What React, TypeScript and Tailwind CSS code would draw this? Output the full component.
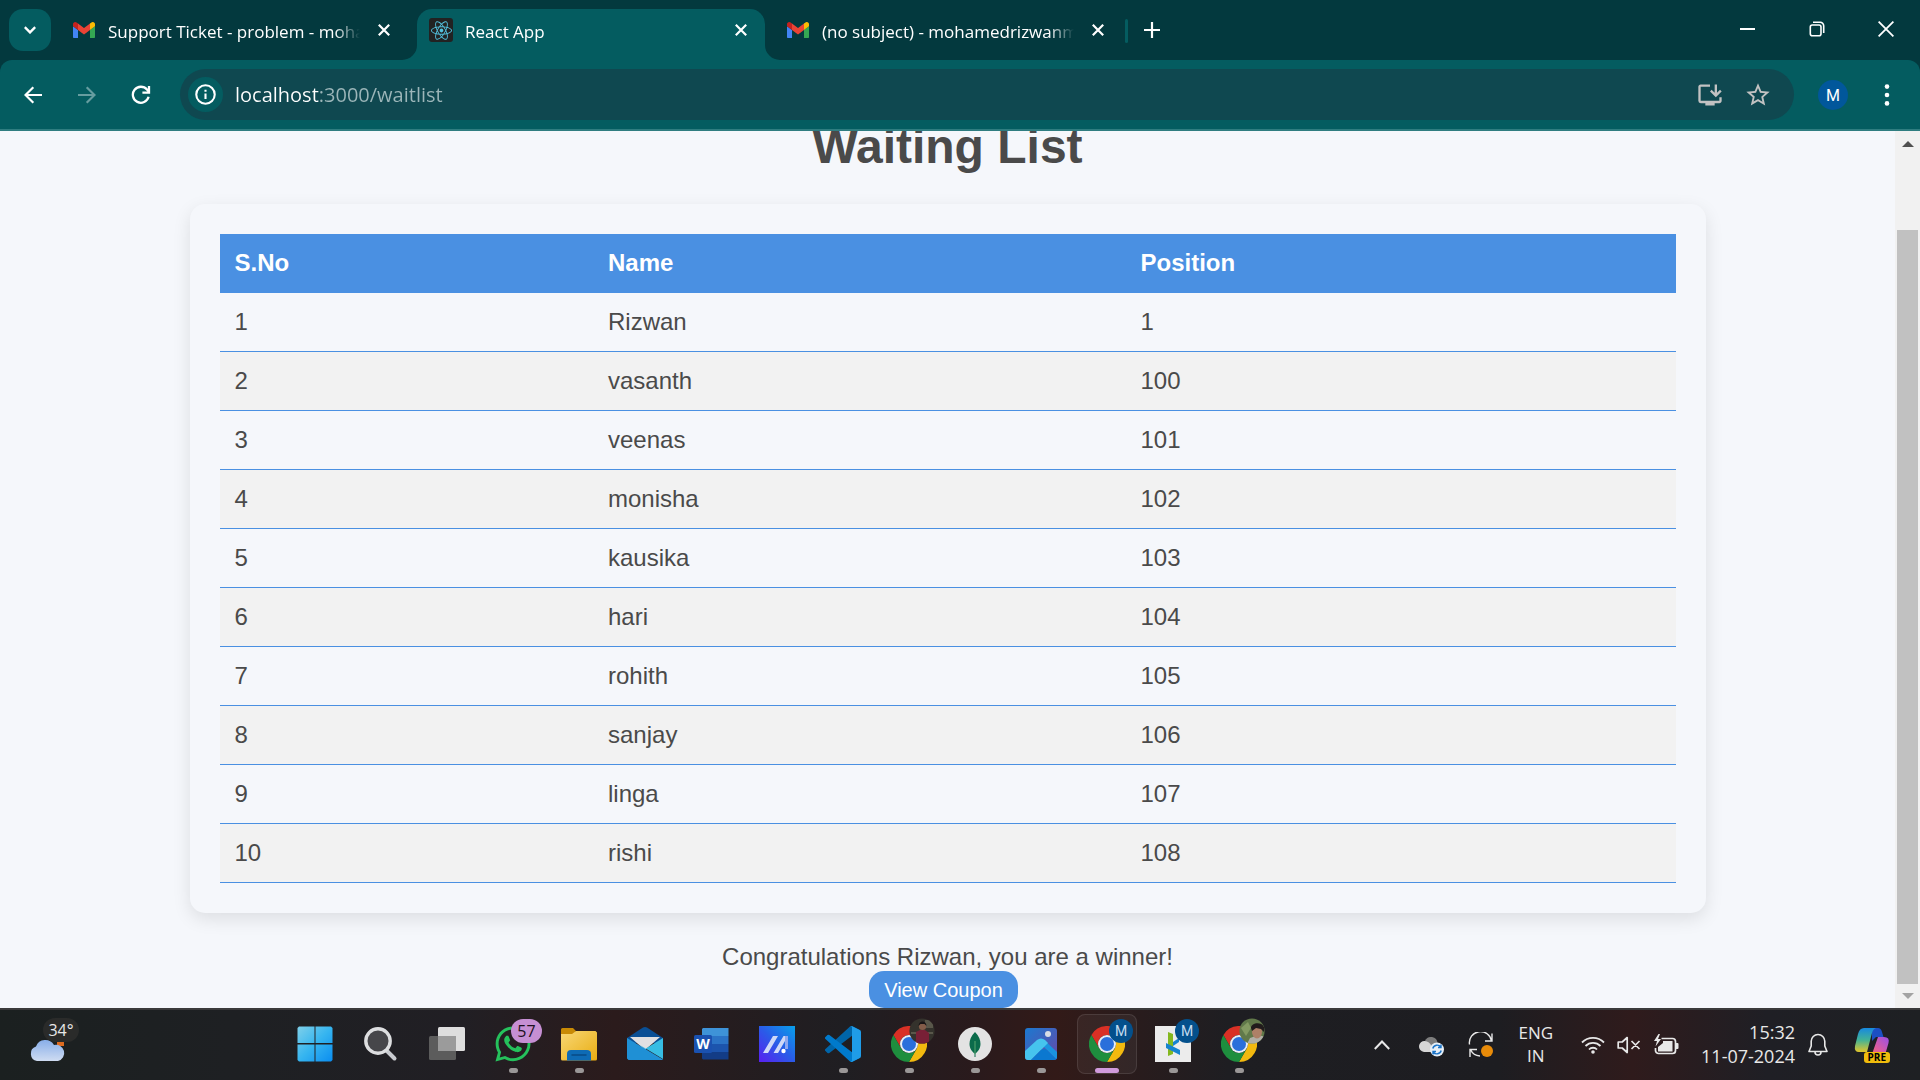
import React from "react";
import type { ReactNode } from "react";
import { FaReact, FaWhatsapp } from "react-icons/fa";
import { MdInstallDesktop, MdStarBorder } from "react-icons/md";

type IconProps = { className?: string };

const entries = [
  { name: "Rizwan", position: 1 },
  { name: "vasanth", position: 100 },
  { name: "veenas", position: 101 },
  { name: "monisha", position: 102 },
  { name: "kausika", position: 103 },
  { name: "hari", position: 104 },
  { name: "rohith", position: 105 },
  { name: "sanjay", position: 106 },
  { name: "linga", position: 107 },
  { name: "rishi", position: 108 },
];

function Gmail({ className }: IconProps) {
  return (
    <svg viewBox="52 42 88 66" className={className} aria-hidden="true">
      <path fill="#4285f4" d="M58 108h14V74L52 59v43c0 3.32 2.69 6 6 6" />
      <path fill="#34a853" d="M120 108h14c3.32 0 6-2.69 6-6V59l-20 15" />
      <path fill="#fbbc04" d="M120 48v26l20-15v-8c0-7.42-8.47-11.65-14.4-7.2" />
      <path fill="#ea4335" d="M72 74V48l24 18 24-18v26L96 92" />
      <path fill="#c5221f" d="M52 51v8l20 15V48l-5.6-4.2c-5.94-4.45-14.4-.22-14.4 7.2" />
    </svg>
  );
}

function Chrome({ className }: IconProps) {
  return (
    <svg viewBox="0 0 36 36" className={className} aria-hidden="true">
      <path fill="#d93025" d="M18 9H33.6A18 18 0 0 0 2.4 9L10.2 22.5A9 9 0 0 1 18 9z" />
      <path fill="#f2b90f" d="M33.6 9H18A9 9 0 0 1 25.8 22.5L18 36A18 18 0 0 0 33.6 9z" />
      <path fill="#1e8e3e" d="M2.4 9L10.2 22.5A9 9 0 0 0 25.8 22.5L18 36A18 18 0 0 1 2.4 9z" />
      <circle cx="18" cy="18" r="9" fill="#e8eef5" />
      <circle cx="18" cy="18" r="7" fill="#2a6fdb" />
    </svg>
  );
}

function Cross({ className }: IconProps) {
  return (
    <svg viewBox="0 0 12 12" className={className} fill="none" stroke="currentColor" strokeWidth="2.2" aria-hidden="true">
      <path d="M.8.8l10.4 10.4M11.2.8L.8 11.2" />
    </svg>
  );
}

function Tab({ title, icon, active = false }: { title: string; icon: ReactNode; active?: boolean }) {
  return (
    <div
      role="tab"
      aria-selected={active}
      className={`relative flex h-[51px] w-[348px] items-center rounded-t-[15px] pr-[18px] pb-[9px] pl-3 ${active ? "bg-[#045c60]" : ""}`}
    >
      {active && (
        <>
          <svg viewBox="0 0 15 15" className="absolute bottom-0 -left-[15px] size-[15px] fill-[#045c60]" aria-hidden="true">
            <path d="M15 0v15H0A15 15 0 0 0 15 0z" />
          </svg>
          <svg viewBox="0 0 15 15" className="absolute -right-[15px] bottom-0 size-[15px] fill-[#045c60]" aria-hidden="true">
            <path d="M0 0v15h15A15 15 0 0 1 0 0z" />
          </svg>
        </>
      )}
      <span className="flex size-6 shrink-0 items-center justify-center">{icon}</span>
      <span className="ml-3 flex-1 overflow-hidden pt-1 text-[17px] leading-6 whitespace-nowrap [mask-image:linear-gradient(to_right,#000_90%,transparent)]">
        {title}
      </span>
      <button type="button" aria-label={`Close ${title}`} className="ml-[18px] shrink-0">
        <Cross className="size-3" />
      </button>
    </div>
  );
}

function TabStrip() {
  return (
    <div className="flex h-[60px] items-end justify-between bg-[#03393e] text-white">
      <div className="flex items-end">
        <button type="button" aria-label="Search tabs" className="mb-[9px] ml-[9px] flex size-[42px] items-center justify-center rounded-[14px] bg-[#045c60]">
          <svg viewBox="0 0 12 8" className="h-2 w-3" fill="none" stroke="currentColor" strokeWidth="2.4" aria-hidden="true">
            <path d="M.8 1.2L6 6.4l5.2-5.2" />
          </svg>
        </button>
        <div role="tablist" className="ml-[9px] flex gap-[9px]">
          <Tab title="Support Ticket - problem - moham" icon={<Gmail className="w-[22px]" />} />
          <Tab
            title="React App"
            active
            icon={
              <span className="flex size-6 items-center justify-center rounded-[3px] bg-[#222]">
                <FaReact className="size-[21px] text-[#53c1de]" />
              </span>
            }
          />
          <Tab title="(no subject) - mohamedrizwanm" icon={<Gmail className="w-[22px]" />} />
        </div>
        <span className="mb-[17px] ml-[3px] h-6 w-[3px] rounded-full bg-[#045c60]" />
        <button type="button" aria-label="New tab" className="mb-[22px] ml-4">
          <svg viewBox="0 0 16 16" className="size-4" fill="none" stroke="currentColor" strokeWidth="2.2" aria-hidden="true">
            <path d="M8 0v16M0 8h16" />
          </svg>
        </button>
      </div>
      <div className="flex h-full items-center pb-0.5">
        <button type="button" aria-label="Minimize" className="flex h-full w-[69px] items-center justify-center">
          <span className="h-0.5 w-[15px] bg-white" />
        </button>
        <button type="button" aria-label="Restore" className="flex h-full w-[69px] items-center justify-center">
          <svg viewBox="0 0 16 16" className="size-4" fill="none" stroke="currentColor" strokeWidth="1.6" aria-hidden="true">
            <rect x="1.3" y="4" width="10.7" height="10.7" rx="2" />
            <path d="M4 1.3h7.2a3.5 3.5 0 0 1 3.5 3.5V12" />
          </svg>
        </button>
        <button type="button" aria-label="Close window" className="flex h-full w-[69px] items-center justify-center">
          <svg viewBox="0 0 16 16" className="size-4" fill="none" stroke="currentColor" strokeWidth="1.8" aria-hidden="true">
            <path d="M.6.6l14.8 14.8M15.4.6L.6 15.4" />
          </svg>
        </button>
      </div>
    </div>
  );
}

function Toolbar() {
  return (
    <div className="bg-[#03393e]">
      <div className="flex h-[71px] items-center rounded-t-[12px] border-b-2 border-[#2f7d80] bg-[#045c60] pr-[18px] text-white">
        <button type="button" aria-label="Back" className="flex w-[54px] justify-center pl-3">
          <svg viewBox="0 0 18 18" className="size-[18px]" fill="none" stroke="currentColor" strokeWidth="2.2" aria-hidden="true">
            <path d="M18 9H1.8M9.3 1.2L1.5 9l7.8 7.8" />
          </svg>
        </button>
        <button type="button" aria-label="Forward" className="flex w-[54px] justify-center pl-3 text-[#669da0]">
          <svg viewBox="0 0 18 18" className="size-[18px]" fill="none" stroke="currentColor" strokeWidth="2.2" aria-hidden="true">
            <path d="M0 9h16.2M8.7 1.2L16.5 9l-7.8 7.8" />
          </svg>
        </button>
        <button type="button" aria-label="Reload" className="flex w-[54px] justify-center pl-3">
          <svg viewBox="0 0 20 20" className="size-5" fill="none" stroke="currentColor" strokeWidth="2.3" aria-hidden="true">
            <path d="M17.6 11.8A8 8 0 1 1 16 4.6l1.8 2.2" />
            <path d="M18 1v6.6h-6.6" />
          </svg>
        </button>
        <div className="ml-[18px] flex h-[51px] flex-1 items-center rounded-full bg-[#0f4850] pr-[22px] pl-2">
          <button type="button" aria-label="Site information" className="flex size-[35px] items-center justify-center rounded-full bg-[#045c60]">
            <svg viewBox="0 0 20 20" className="size-[21px]" fill="none" stroke="currentColor" strokeWidth="2" aria-hidden="true">
              <circle cx="10" cy="10" r="8.8" />
              <path d="M10 9v5.4M10 5.4v2" />
            </svg>
          </button>
          <input
            aria-label="Address"
            defaultValue="localhost:3000/waitlist"
            className="ml-3 h-8 flex-1 bg-[linear-gradient(to_right,#fff_84px,#9cb6b9_84px)] bg-clip-text text-xl text-transparent outline-none"
          />
          <button type="button" aria-label="Install app" className="mr-5">
            <MdInstallDesktop className="size-7 text-[#c2c2c2]" />
          </button>
          <button type="button" aria-label="Bookmark this page">
            <MdStarBorder className="size-7 text-[#c2c2c2]" />
          </button>
        </div>
        <button type="button" aria-label="Profile" className="ml-6 flex size-[30px] items-center justify-center rounded-full bg-[#01579b] pt-0.5 font-[Roboto,sans-serif] text-base">
          M
        </button>
        <button type="button" aria-label="Menu" className="ml-6 flex w-[30px] justify-center">
          <svg viewBox="0 0 6 22" className="h-[22px] w-1.5 fill-current" aria-hidden="true">
            <circle cx="3" cy="2.6" r="2.3" />
            <circle cx="3" cy="11" r="2.3" />
            <circle cx="3" cy="19.4" r="2.3" />
          </svg>
        </button>
      </div>
    </div>
  );
}

function Scrollbar() {
  return (
    <div className="flex w-[25px] shrink-0 flex-col items-center bg-[#f1f1f1]" aria-hidden="true">
      <div className="flex h-6 items-center pt-0.5">
        <svg viewBox="0 0 12 6" className="h-1.5 w-3 fill-[#505050]">
          <path d="M6 0l6 6H0z" />
        </svg>
      </div>
      <div className="flex w-full flex-1 items-end justify-center">
        <div className="h-[91%] w-[21px] bg-[#c1c1c1]" />
      </div>
      <div className="flex h-6 items-center">
        <svg viewBox="0 0 12 6" className="h-1.5 w-3 fill-[#a3a3a3]">
          <path d="M6 6L0 0h12z" />
        </svg>
      </div>
    </div>
  );
}

function WaitingList() {
  return (
    <main className="flex min-w-0 flex-1 flex-col items-center justify-end overflow-hidden bg-[#f5f7fb] font-['Liberation_Sans',Arial,sans-serif] text-2xl leading-7 text-[#4a4a4a]">
      <h1 className="mb-[29px] text-5xl leading-14 font-bold">Waiting List</h1>
      <section className="w-4/5 rounded-[15px] bg-[#f5f7fb] p-[30px] shadow-[0_6px_18px_rgba(0,0,0,0.1)]">
        <table className="w-full border-collapse text-left">
          <thead className="bg-[#4a90e2] text-white">
            <tr className="border-b border-[#4a90e2]">
              <th className="p-[15px]">S.No</th>
              <th className="p-[15px]">Name</th>
              <th className="p-[15px]">Position</th>
            </tr>
          </thead>
          <tbody>
            {entries.map((entry, index) => (
              <tr key={entry.name} className="border-b border-[#4a90e2] even:bg-[#f2f2f2]">
                <td className="p-[15px]">{index + 1}</td>
                <td className="p-[15px]">{entry.name}</td>
                <td className="p-[15px]">{entry.position}</td>
              </tr>
            ))}
          </tbody>
        </table>
      </section>
      <p className="mt-[30px]">Congratulations Rizwan, you are a winner!</p>
      <button type="button" className="mr-2 rounded-[15px] bg-[#4a90e2] px-[15px] pt-2 pb-1.5 text-xl leading-[23px] text-white">
        View Coupon
      </button>
    </main>
  );
}

function ProfileBadge() {
  return (
    <span className="absolute -top-[7px] -right-2 flex size-6 items-center justify-center rounded-full bg-[#04508c] font-[Roboto,sans-serif] text-sm leading-none text-[#c5dcf0]">
      M
    </span>
  );
}

function PhotoBadge({ leafy = false }: { leafy?: boolean }) {
  return (
    <svg viewBox="0 0 26 26" className="absolute -top-2 -right-2 size-[26px]" aria-hidden="true">
      <clipPath id={leafy ? "photo-leafy" : "photo-dark"}>
        <circle cx="13" cy="13" r="12.6" />
      </clipPath>
      {leafy ? (
        <g clipPath="url(#photo-leafy)">
          <path fill="#61794a" d="M0 0h26v26H0z" />
          <path fill="#839a62" d="M2 10l7-6 3 6-5 8z" />
          <path fill="#b0afa6" d="M11 20l9-3 6 2v7H8z" />
          <ellipse cx="18" cy="14" rx="5" ry="6.5" fill="#ad8067" />
          <path fill="#211b1c" d="M12 10c0-5 10-7 13-1v5l-3-3-5-1-4 3z" />
        </g>
      ) : (
        <g clipPath="url(#photo-dark)">
          <path fill="#34322c" d="M0 0h26v26H0z" />
          <path fill="#59574a" d="M2 14h22v2H2zM16 2h8v8h-8z" />
          <path fill="#782036" d="M7 26V14l4-2h5l4 3v11z" />
          <circle cx="13.5" cy="8.5" r="3.6" fill="#835c49" />
          <path fill="#191516" d="M9.5 8c0-6 8-6 8 0l-2-2h-4z" />
        </g>
      )}
    </svg>
  );
}

const dockItems: { label: string; icon: ReactNode; state?: "open" | "active" }[] = [
  {
    label: "Start",
    icon: (
      <svg viewBox="0 0 36 36" className="size-9">
        <defs>
          <linearGradient id="win" x1="0" y1="0" x2="1" y2="1">
            <stop offset="0" stopColor="#7fd0ea" />
            <stop offset=".5" stopColor="#36b5f0" />
            <stop offset="1" stopColor="#0a8df0" />
          </linearGradient>
        </defs>
        <path fill="url(#win)" d="M2 .5h15.500v16.500H.5V2zM18.500.500H34L35.500 2V17H18.500zM.5 18.500H17.500V35.500H2L.5 34zM18.500 18.500H35.500V34L34 35.500H18.500z" />
      </svg>
    ),
  },
  {
    label: "Search",
    icon: (
      <svg viewBox="0 0 36 36" className="size-9">
        <path d="M24 25l7.500 7.500" stroke="#c9cbd0" strokeWidth="4" strokeLinecap="round" />
        <circle cx="15" cy="15" r="12.200" fill="#46464a" stroke="#dddee0" strokeWidth="3.400" />
      </svg>
    ),
  },
  {
    label: "Task view",
    icon: (
      <svg viewBox="0 0 36 36" className="size-9">
        <rect x="9" y="1" width="27" height="24" rx="1.500" fill="#dedede" />
        <rect x="0" y="10" width="27" height="24" rx="1.500" fill="#5c5c5c" />
        <path fill="#9b9b9b" d="M9 10h18v15H9z" />
      </svg>
    ),
  },
  {
    label: "WhatsApp",
    state: "open",
    icon: (
      <>
        <FaWhatsapp className="-mt-0.5 -ml-0.5 size-10 text-[#25c15c]" />
        <span className="absolute -top-[7px] -right-[11px] flex h-6 w-[31px] items-center justify-center rounded-full bg-[#c68fd3] text-base leading-none text-[#1d1020]">57</span>
      </>
    ),
  },
  {
    label: "File Explorer",
    state: "open",
    icon: (
      <svg viewBox="0 0 36 36" className="size-9">
        <defs>
          <linearGradient id="folder" x1="0" y1="0" x2="1" y2="1">
            <stop offset="0" stopColor="#f8d775" />
            <stop offset="1" stopColor="#e9ad12" />
          </linearGradient>
        </defs>
        <path fill="#c88a05" d="M0 3.500A1.500 1.500 0 0 1 1.500 2H12l3 3-3 5H0z" />
        <path fill="url(#folder)" d="M0 8h11l4-3h19.500L36 6.500V33a1.500 1.500 0 0 1-1.500 1.500h-33A1.500 1.500 0 0 1 0 33z" />
        <path fill="#0e6bb5" d="M6 34.500V28a4 4 0 0 1 4-4h16a4 4 0 0 1 4 4v6.500z" />
        <path stroke="#084b85" strokeWidth="1.500" strokeLinecap="round" d="M11 29h14" />
      </svg>
    ),
  },
  {
    label: "Mail",
    icon: (
      <svg viewBox="0 0 36 36" className="size-9">
        <path fill="#0a4f95" d="M0 12L16 1.500a4 4 0 0 1 4 0L36 12v5H0z" />
        <path fill="#e0e0e2" d="M3 11h30l-15 13z" />
        <path fill="#37bde3" d="M36 12v21L12 18.500 18 23z" />
        <path fill="#1f90d5" d="M0 12l36 21.500-1 .500H1.500L0 32.500z" />
      </svg>
    ),
  },
  {
    label: "Word",
    icon: (
      <>
        <svg viewBox="0 0 36 36" className="size-9">
          <path fill="#3e93d8" d="M10 2h25.500v8H9V3z" />
          <path fill="#2b73c6" d="M9 10h26.500v8H9z" />
          <path fill="#1c54ad" d="M9 18h26.500v8H9z" />
          <path fill="#133c86" d="M9 26h26.500v7.500H10L9 32.500z" />
          <rect x="1" y="9" width="18" height="18" rx="1.500" fill="#1a51b0" />
        </svg>
        <span className="absolute top-[9px] left-px w-[18px] text-center text-sm leading-[18px] font-bold text-white">W</span>
      </>
    ),
  },
  {
    label: "Assistant",
    icon: (
      <svg viewBox="0 0 36 36" className="size-9">
        <defs>
          <linearGradient id="asst" x1="0" y1="1" x2="1" y2="0">
            <stop offset="0" stopColor="#5a1ff0" />
            <stop offset=".5" stopColor="#2a5be8" />
            <stop offset="1" stopColor="#08a0ea" />
          </linearGradient>
        </defs>
        <path fill="url(#asst)" d="M0 0h36v36H0z" />
        <path fill="#cfd8f7" d="M4 27L14 10h5L9 27zM14.500 27l10-17H29v12h-3v-7l-7 12z" />
        <path fill="#8fa8f0" d="M26 10h3v13h-3z" />
        <circle cx="24.500" cy="25" r="2.200" fill="#fff" />
      </svg>
    ),
  },
  {
    label: "Visual Studio Code",
    state: "open",
    icon: (
      <svg viewBox="0 0 100 100" className="size-9">
        <path fill="#0065A9" d="M96.461 10.796 75.857.876a6.230 6.230 0 0 0-7.107 1.207l-67.451 61.500a4.167 4.167 0 0 0 .004 6.162l5.510 5.009a4.167 4.167 0 0 0 5.320.236l81.228-61.620c2.725-2.067 6.639-.124 6.639 3.297v-.240a6.250 6.250 0 0 0-3.539-5.630Z" />
        <path fill="#007ACC" d="m96.461 89.204-20.604 9.920a6.229 6.229 0 0 1-7.107-1.207l-67.451-61.500a4.167 4.167 0 0 1 .004-6.162l5.510-5.009a4.167 4.167 0 0 1 5.320-.236l81.228 61.620c2.725 2.067 6.639.124 6.639-3.297v.240a6.250 6.250 0 0 1-3.539 5.630Z" />
        <path fill="#1F9CE8" d="M75.858 99.126a6.232 6.232 0 0 1-7.108-1.210c2.306 2.307 6.250.674 6.250-2.588V4.672c0-3.262-3.944-4.895-6.250-2.589a6.232 6.232 0 0 1 7.108-1.210l20.600 9.908A6.250 6.250 0 0 1 100 16.413v67.174a6.250 6.250 0 0 1-3.541 5.633l-20.601 9.906Z" />
      </svg>
    ),
  },
  { label: "Chrome profile one", state: "open", icon: <><Chrome className="size-9" /><PhotoBadge /></> },
  {
    label: "MongoDB Compass",
    state: "open",
    icon: (
      <svg viewBox="0 0 36 36" className="size-9">
        <circle cx="18" cy="18" r="17" fill="#e3e3e3" />
        <path fill="#0b6b4b" d="M18 6c4 4 5.500 8 5.500 12 0 4.500-2.500 7.500-5 9.500V31h-1v-3.500c-2.500-2-5-5-5-9.500 0-4 1.500-8 5.500-12z" />
        <path fill="#57a66f" d="M17.500 15h1v13h-1z" />
      </svg>
    ),
  },
  {
    label: "Photos",
    state: "open",
    icon: (
      <svg viewBox="0 0 36 36" className="size-9">
        <defs>
          <linearGradient id="sky" x1="0" y1="0" x2="1" y2="1">
            <stop offset="0" stopColor="#1b79d0" />
            <stop offset="1" stopColor="#6748a8" />
          </linearGradient>
          <clipPath id="photos-frame">
            <rect x="2" y="2" width="32" height="32" rx="3" />
          </clipPath>
        </defs>
        <g clipPath="url(#photos-frame)">
          <path fill="url(#sky)" d="M2 2h32v32H2z" />
          <path fill="#1a93df" d="M20 13l15 14v8L18 18z" />
          <path fill="#46c4ee" d="M1 26l13-12q4-3 8 0l3 3L7 35H1z" />
          <path fill="#0b78d0" d="M8 34l10-10q3-2 6 0l10 10z" />
        </g>
        <circle cx="25" cy="8" r="3" fill="#d8dde5" />
      </svg>
    ),
  },
  { label: "Chrome", state: "active", icon: <><Chrome className="size-9" /><ProfileBadge /></> },
  {
    label: "Web app",
    state: "open",
    icon: (
      <>
        <svg viewBox="0 0 36 36" className="size-9">
          <path fill="#ececec" d="M0 0h36v36H0z" />
          <path fill="#84b81f" d="M13 6l5 2v20l-5 2z" />
          <path fill="#1683cf" d="M11 17l14 7v5l-14-7z" />
          <path fill="#1683cf" d="M18 16l6-4v4l-6 4z" />
        </svg>
        <ProfileBadge />
      </>
    ),
  },
  { label: "Chrome profile two", state: "open", icon: <><Chrome className="size-9" /><PhotoBadge leafy /></> },
];

function Taskbar() {
  return (
    <footer className="flex h-[72px] shrink-0 border-t-2 border-[#3a3a3b] bg-[linear-gradient(to_right,#1b2020,#1e2023_12%,#211f24_24%,#2b1b1c_32%,#1f1e22_44%,#2a1a1c_51%,#321a18_55%,#1e1e22_64%,#1d1d21_78%,#2f1b1c_85%,#1f1f25_92%,#1e2023)] text-[#e8e8e8]">
      <div className="w-[282px] shrink-0">
        <button type="button" aria-label="Weather" className="relative mt-4 ml-7 block">
          <svg viewBox="0 0 40 40" className="size-10">
            <defs>
              <linearGradient id="cloud" x1="0" y1="0" x2="0" y2="1">
                <stop offset="0" stopColor="#88aee8" />
                <stop offset="1" stopColor="#cfdcf2" />
              </linearGradient>
            </defs>
            <path fill="#dd6b20" d="M29 12h7v8h-7z" />
            <path fill="url(#cloud)" d="M9 35a7.500 7.500 0 0 1-1-14.500 10 10 0 0 1 18-1.500 8.200 8.200 0 1 1 4 16z" />
          </svg>
          <span className="absolute -top-2 left-[15px] flex h-6 w-9 items-center justify-center rounded-full bg-[#2a2b2a] text-base leading-none">34°</span>
        </button>
      </div>
      <nav className="flex" aria-label="Pinned apps">
        {dockItems.map((item) => (
          <button key={item.label} type="button" aria-label={item.label} className="flex w-[66px] justify-center">
            <span
              className={`mt-1 flex h-[60px] w-[60px] flex-col items-center rounded-lg border pt-[11px] ${item.state === "active" ? "border-white/10 bg-white/5" : "border-transparent"}`}
            >
              <span className="relative block size-9">{item.icon}</span>
              {item.state && (
                <span className={`mt-1.5 h-[5px] rounded-full ${item.state === "active" ? "w-6 bg-[#d09bdc]" : "w-[9px] bg-[#9a9797]"}`} />
              )}
            </span>
          </button>
        ))}
      </nav>
      <div className="ml-auto flex items-center pr-[30px]">
        <button type="button" aria-label="Hidden icons">
          <svg viewBox="0 0 16 10" className="h-2.5 w-4" fill="none" stroke="currentColor" strokeWidth="2" aria-hidden="true">
            <path d="M.8 9L8 1.500 15.200 9" />
          </svg>
        </button>
        <button type="button" aria-label="OneDrive" className="ml-7">
          <svg viewBox="0 0 26 24" className="h-6 w-[26px]">
            <path fill="#7d7d7d" d="M7 8a6.500 6.500 0 0 1 12.500 2L14 15z" />
            <path fill="#d6d6d6" d="M6 19A5.500 5.500 0 0 1 7 8a8 8 0 0 1 6 4l4 7z" />
            <circle cx="19" cy="16.500" r="7" fill="#e6eef6" />
            <path d="M14.800 15.500a4.500 4.500 0 0 1 8-1.500M23.200 17.500a4.500 4.500 0 0 1-8 1.500M23 11.500V14.500h-3M15 21.500V18.500h3" fill="none" stroke="#1a73c7" strokeWidth="1.400" />
          </svg>
        </button>
        <button type="button" aria-label="Updates" className="ml-6">
          <svg viewBox="0 0 26 26" className="size-[26px]" fill="none" stroke="currentColor" strokeWidth="1.400">
            <path d="M1.500 12.500A11 11 0 0 1 23.500 9M24 1.500V9h-7M2 25v-7.500h7M2.500 17.500A11 11 0 0 0 12 24" />
            <circle cx="19" cy="19" r="6" fill="#e88b09" stroke="none" />
          </svg>
        </button>
        <button type="button" className="ml-6 pb-0.5 text-center text-[17px] leading-[23px]">
          ENG
          <br />
          IN
        </button>
        <button type="button" aria-label="Network, volume and battery" className="ml-7 flex items-center gap-3">
          <svg viewBox="0 0 24 20" className="h-5 w-6" fill="none" stroke="currentColor" strokeWidth="1.800">
            <path d="M1 7.500a15.500 15.500 0 0 1 22 0M4.500 11a10.500 10.500 0 0 1 15 0M8 14.500a5.500 5.500 0 0 1 8 0" />
            <circle cx="12" cy="17" r="1.800" fill="currentColor" stroke="none" />
          </svg>
          <svg viewBox="0 0 24 20" className="h-5 w-6" fill="none" stroke="currentColor" strokeWidth="1.700">
            <path d="M1.200 7v6h4l5 4.500v-15L5.200 7zM14.500 6l8 8M22.500 6l-8 8" strokeLinejoin="round" />
          </svg>
          <svg viewBox="0 0 26 22" className="h-[22px] w-[26px]" fill="none" stroke="currentColor" strokeWidth="1.700">
            <path d="M8.500 4.500h11A3 3 0 0 1 22.500 7.500v9a3 3 0 0 1-3 3H5.500a3 3 0 0 1-3-3V14" />
            <path fill="currentColor" stroke="none" d="M10 7h9.500v10.500H5V13l5-4zM23 9h1.500q1 0 1 1v4q0 1-1 1H23zM5.500 0L1 7h3L2.500 12.500 8 5H5L7 0z" />
          </svg>
        </button>
        <button type="button" className="ml-[22px] pb-0.5 text-right text-lg leading-6">
          15:32
          <br />
          11-07-2024
        </button>
        <button type="button" aria-label="Notifications" className="ml-[13px]">
          <svg viewBox="0 0 20 24" className="h-6 w-5" fill="none" stroke="currentColor" strokeWidth="1.600" strokeLinejoin="round">
            <path d="M10 1.500A6.800 6.800 0 0 0 3.200 8.300V13L1 18.500h18L16.800 13V8.300A6.800 6.800 0 0 0 10 1.500zM7 19a3 3 0 0 0 6 0" />
          </svg>
        </button>
        <button type="button" aria-label="Copilot" className="relative ml-[26px]">
          <svg viewBox="0 0 36 36" className="size-9">
            <defs>
              <linearGradient id="cop-left" x1="0" y1="0" x2="0" y2="1">
                <stop offset="0" stopColor="#1789e0" />
                <stop offset=".5" stopColor="#42b296" />
                <stop offset="1" stopColor="#e3c52a" />
              </linearGradient>
              <linearGradient id="cop-right" x1="1" y1="0" x2="0" y2="1">
                <stop offset="0" stopColor="#9950e8" />
                <stop offset=".5" stopColor="#df5c9c" />
                <stop offset="1" stopColor="#f07a48" />
              </linearGradient>
            </defs>
            <path fill="#1c4fc4" d="M18 1h6q3 0 4 4l1.500 5H22l-4 4z" />
            <path fill="url(#cop-right)" d="M24 10h6q6 0 4.500 6L31 28q-1 4-5 4H10q3-1 4-5h4z" />
            <path fill="url(#cop-left)" d="M10 1h12q-3 1-4 5l-5 19H5q-5 0-4-6L4 7q1.500-6 6-6z" />
          </svg>
          <span className="absolute right-0 bottom-0 rounded-[3px] bg-[#f0bc0c] px-1 text-[10px] leading-[11px] font-bold text-black">PRE</span>
        </button>
      </div>
    </footer>
  );
}

export default function App() {
  return (
    <div className="flex h-screen flex-col overflow-hidden font-['Open_Sans','Noto_Sans',sans-serif]">
      <header>
        <TabStrip />
        <Toolbar />
      </header>
      <div className="flex min-h-0 flex-1">
        <WaitingList />
        <Scrollbar />
      </div>
      <Taskbar />
    </div>
  );
}
